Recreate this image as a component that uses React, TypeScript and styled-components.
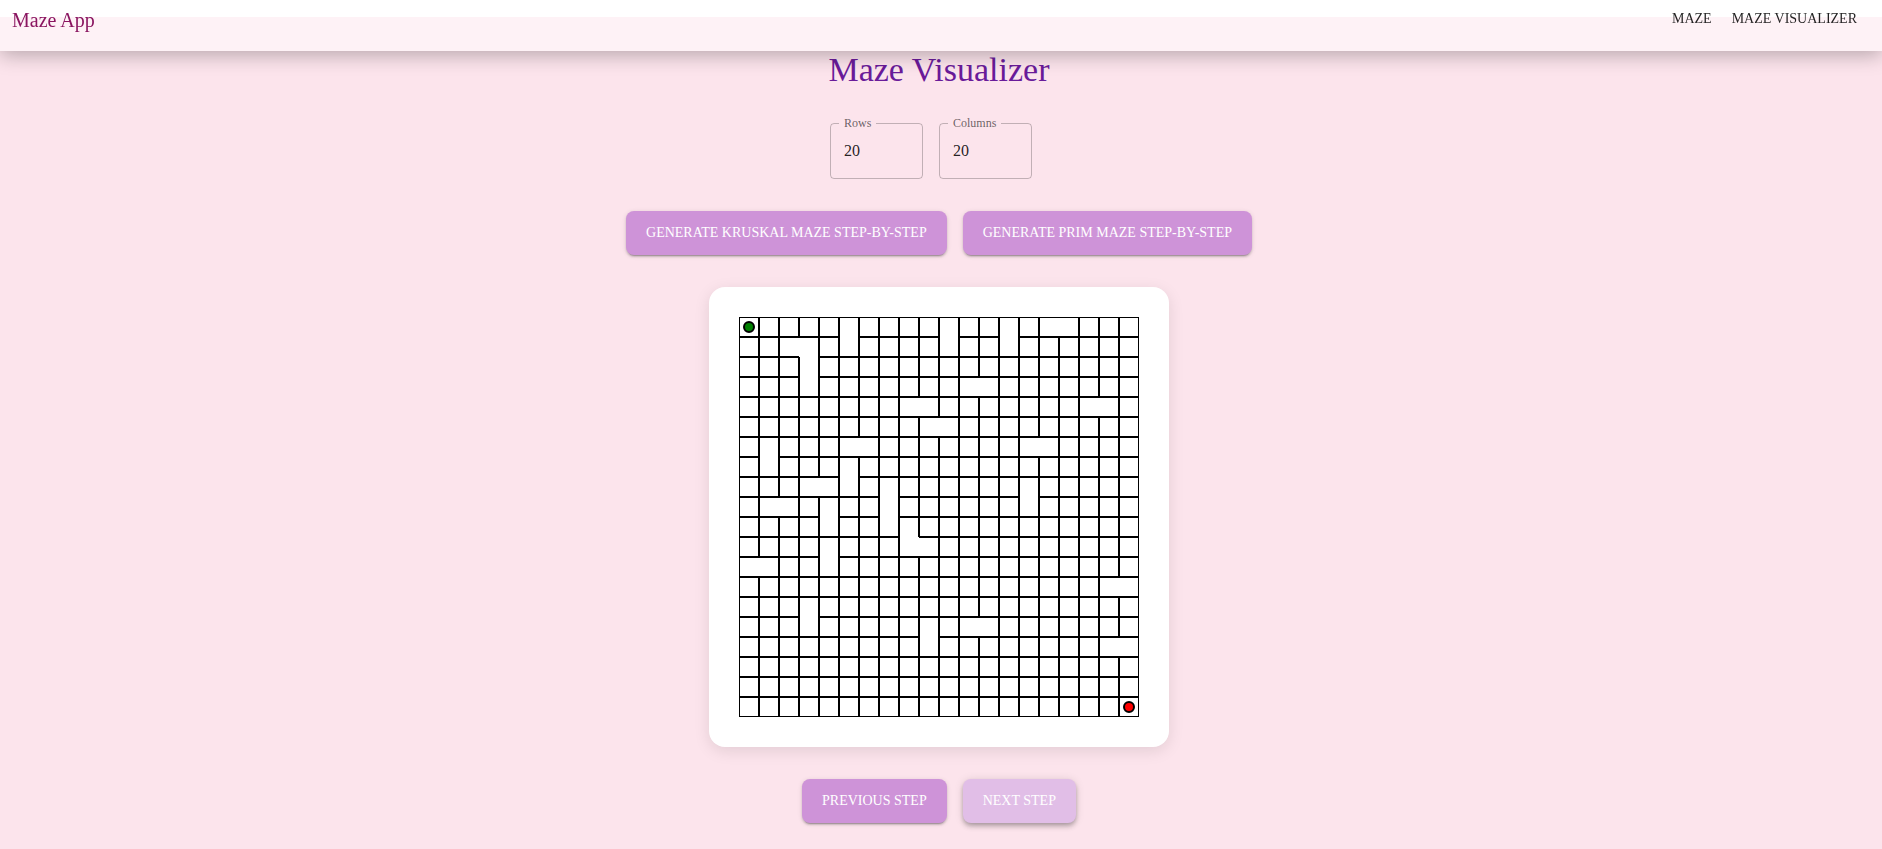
import React, { useState } from "react";
import styled, { createGlobalStyle } from "styled-components";

const GlobalStyle = createGlobalStyle`
  *, *::before, *::after { box-sizing: border-box; }
  body {
    margin: 0;
    background: #fff;
    font-family: "Liberation Serif", "Times New Roman", serif;
    color: rgba(0, 0, 0, 0.87);
  }
`;

const AppBar = styled.header`
  position: fixed;
  top: 0;
  left: 0;
  right: 0;
  z-index: 10;
  height: 51px;
  padding: 8px 25px 0 12px;
  display: flex;
  justify-content: space-between;
  align-items: flex-start;
  background: rgba(255, 255, 255, 0.5);
  box-shadow: 0 4px 20px rgba(0, 0, 0, 0.28);
`;

const Brand = styled.a`
  font-size: 20px;
  line-height: 24px;
  color: #8a1560;
  text-decoration: none;
`;

const Nav = styled.nav`
  display: flex;
  gap: 20px;
`;

const NavLink = styled.a`
  font-size: 14px;
  line-height: 22px;
  text-transform: uppercase;
  text-decoration: none;
  color: rgba(0, 0, 0, 0.87);
`;

const Page = styled.main`
  margin-top: 17px;
  min-height: calc(100vh - 17px);
  padding: 32px 4px 24px 0;
  display: flex;
  flex-direction: column;
  align-items: center;
  background: #fce4ec;
`;

const Title = styled.h1`
  margin: 0 0 24px;
  font-size: 34px;
  line-height: 42px;
  font-weight: 400;
  color: #6a1b9a;
`;

const Fields = styled.div`
  display: flex;
  gap: 16px;
  margin: 0 16px 32px 0;
`;

const Field = styled.fieldset`
  width: 93px;
  min-width: 0;
  height: 64px;
  margin: 0;
  padding: 0 13px;
  border: 1px solid rgba(0, 0, 0, 0.23);
  border-radius: 4px;
`;

const FieldLabel = styled.legend`
  margin-left: -5px;
  padding: 0 5px;
  font-size: 12px;
  line-height: 16px;
  color: rgba(0, 0, 0, 0.6);
`;

const FieldInput = styled.input`
  display: block;
  width: 100%;
  height: 24px;
  margin-top: 8px;
  padding: 0;
  border: 0;
  outline: 0;
  background: none;
  font: inherit;
  font-size: 16px;
  color: inherit;
  appearance: textfield;
  &::-webkit-inner-spin-button { appearance: none; margin: 0; }
`;

const ButtonRow = styled.div`
  display: flex;
  gap: 16px;
`;

const Button = styled.button<{ $raised?: boolean }>`
  height: 44px;
  padding: 0 20px;
  border: 0;
  border-radius: 8px;
  font-family: inherit;
  font-size: 14px;
  line-height: 24px;
  text-transform: uppercase;
  color: #fff;
  cursor: pointer;
  background: ${(p) => (p.$raised ? "#e1bee7" : "#ce93d8")};
  box-shadow: ${(p) =>
    p.$raised
      ? "0 2px 4px -1px rgba(0,0,0,.2), 0 4px 5px 0 rgba(0,0,0,.14), 0 1px 10px 0 rgba(0,0,0,.12)"
      : "0 3px 1px -2px rgba(0,0,0,.2), 0 2px 2px 0 rgba(0,0,0,.14), 0 1px 5px 0 rgba(0,0,0,.12)"};
`;

const MazeCard = styled.section`
  margin: 32px 0;
  padding: 30px;
  border-radius: 16px;
  background: #fff;
  box-shadow: 0 4px 16px rgba(0, 0, 0, 0.1);
`;

const MazeSvg = styled.svg`
  display: block;
`;

const CELL = 20;

// "row,col" of each cell whose wall towards the next column is open
const OPEN_RIGHT = new Set([
  "0,15", "1,2", "3,11", "4,8", "4,17", "5,9", "6,5", "6,14", "8,3", "9,1",
  "11,8", "12,0", "13,18", "15,11", "16,18",
]);

// "row,col" of each cell whose wall towards the next row is open
const OPEN_BELOW = new Set([
  "0,5", "0,10", "0,13", "1,3", "2,3", "6,1", "7,5", "8,7", "8,14", "9,4",
  "9,7", "10,8", "11,4", "14,3", "15,9",
]);

function Maze({ rows, cols }: { rows: number; cols: number }) {
  const w = cols * CELL;
  const h = rows * CELL;
  let d = `M0 0H${w}V${h}H0Z`;
  for (let r = 0; r < rows; r++) {
    for (let c = 0; c < cols; c++) {
      const x = (c + 1) * CELL;
      const y = (r + 1) * CELL;
      if (c < cols - 1 && !OPEN_RIGHT.has(`${r},${c}`)) d += `M${x} ${y - CELL}V${y}`;
      if (r < rows - 1 && !OPEN_BELOW.has(`${r},${c}`)) d += `M${x - CELL} ${y}H${x}`;
    }
  }
  return (
    <MazeSvg width={w} height={h} viewBox={`0 0 ${w} ${h}`} role="img" aria-label="Maze">
      <path d={d} fill="none" stroke="#000" strokeWidth="2" />
      <circle cx={CELL / 2} cy={CELL / 2} r="5" fill="green" stroke="#000" strokeWidth="2" />
      <circle cx={w - CELL / 2} cy={h - CELL / 2} r="5" fill="red" stroke="#000" strokeWidth="2" />
    </MazeSvg>
  );
}

export default function App() {
  const [rows, setRows] = useState("20");
  const [cols, setCols] = useState("20");
  return (
    <>
      <GlobalStyle />
      <AppBar>
        <Brand href="#">Maze App</Brand>
        <Nav>
          <NavLink href="#maze">Maze</NavLink>
          <NavLink href="#visualizer">Maze Visualizer</NavLink>
        </Nav>
      </AppBar>
      <Page>
        <Title>Maze Visualizer</Title>
        <Fields>
          <Field>
            <FieldLabel><label htmlFor="rows">Rows</label></FieldLabel>
            <FieldInput id="rows" type="number" value={rows} onChange={(e) => setRows(e.target.value)} />
          </Field>
          <Field>
            <FieldLabel><label htmlFor="cols">Columns</label></FieldLabel>
            <FieldInput id="cols" type="number" value={cols} onChange={(e) => setCols(e.target.value)} />
          </Field>
        </Fields>
        <ButtonRow>
          <Button type="button">Generate Kruskal Maze Step-by-Step</Button>
          <Button type="button">Generate Prim Maze Step-by-Step</Button>
        </ButtonRow>
        <MazeCard>
          <Maze rows={Number(rows)} cols={Number(cols)} />
        </MazeCard>
        <ButtonRow>
          <Button type="button">Previous Step</Button>
          <Button type="button" $raised>Next Step</Button>
        </ButtonRow>
      </Page>
    </>
  );
}
